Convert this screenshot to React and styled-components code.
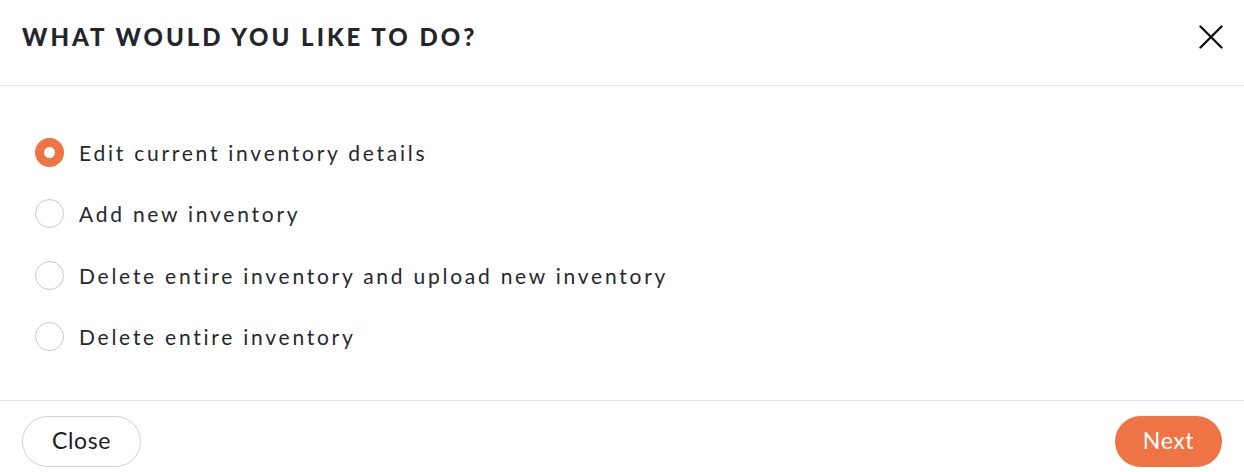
import React, { useState } from "react";
import styled, { createGlobalStyle } from "styled-components";

const GlobalStyle = createGlobalStyle`
  html, body {
    margin: 0;
    padding: 0;
    background: #ffffff;
  }
  body {
    font-family: "Lato", "Noto Sans", sans-serif;
  }
`;

const Modal = styled.div`
  width: 1244px;
  height: 472px;
  display: flex;
  flex-direction: column;
  background: #fff;
  overflow: hidden;
`;

const Header = styled.div`
  height: 86px;
  display: flex;
  align-items: center;
  justify-content: space-between;
  padding: 0 21px 0 22px;
  border-bottom: 1px solid #e3e3ea;
  box-sizing: border-box;
  flex-shrink: 0;
`;

const Title = styled.h2`
  margin: 0;
  margin-top: -13px;
  font-size: 24px;
  font-weight: 900;
  letter-spacing: 3px;
  color: #23252a;
`;

const CloseIcon = styled.button`
  border: none;
  background: none;
  padding: 0;
  margin-top: -12px;
  width: 24px;
  height: 24px;
  cursor: pointer;
  display: flex;
`;

const Body = styled.div`
  flex: 1;
  display: flex;
  flex-direction: column;
  gap: 33.5px;
  padding: 52px 0 0 35px;
  border-bottom: 1px solid #e3e3ea;
`;

const Option = styled.label`
  display: flex;
  align-items: center;
  gap: 15px;
  height: 28px;
  cursor: pointer;
  font-size: 21px;
  letter-spacing: 2.75px;
  color: #26282d;
`;

const Radio = styled.span`
  width: 29px;
  height: 29px;
  border-radius: 50%;
  box-sizing: border-box;
  flex-shrink: 0;
  border: ${(p) => (p.$checked ? "9px solid #ee7446" : "1px solid #c9c9cc")};
  background: #fff;
`;

const Footer = styled.div`
  height: 71px;
  display: flex;
  justify-content: space-between;
  align-items: flex-start;
  padding: 15px 22px 0 22px;
  box-sizing: border-box;
  flex-shrink: 0;
`;

const Button = styled.button`
  height: 51px;
  border-radius: 26px;
  font-family: "Lato", "Noto Sans", sans-serif;
  font-size: 23px;
  letter-spacing: 0.6px;
  padding: 0 0 3px;
  width: ${(p) => p.$w}px;
  cursor: pointer;
  border: ${(p) => (p.$primary ? "none" : "1px solid #cfcfd3")};
  background: ${(p) => (p.$primary ? "#ee7446" : "#fff")};
  color: ${(p) => (p.$primary ? "#fff" : "#1d1d1f")};
`;

const options = [
  "Edit current inventory details",
  "Add new inventory",
  "Delete entire inventory and upload new inventory",
  "Delete entire inventory",
];

export default function App() {
  const [selected, setSelected] = useState(0);
  return (
    <>
      <GlobalStyle />
      <Modal>
        <Header>
          <Title>WHAT WOULD YOU LIKE TO DO?</Title>
          <CloseIcon aria-label="Close">
            <svg width="24" height="24" viewBox="0 0 24 24">
              <path
                d="M1.5 1.5 L22.5 22.5 M22.5 1.5 L1.5 22.5"
                stroke="#111"
                strokeWidth="2.4"
                strokeLinecap="round"
              />
            </svg>
          </CloseIcon>
        </Header>
        <Body>
          {options.map((o, i) => (
            <Option key={o} onClick={() => setSelected(i)}>
              <Radio $checked={selected === i} />
              {o}
            </Option>
          ))}
        </Body>
        <Footer>
          <Button $w={119}>Close</Button>
          <Button $w={107} $primary>
            Next
          </Button>
        </Footer>
      </Modal>
    </>
  );
}
